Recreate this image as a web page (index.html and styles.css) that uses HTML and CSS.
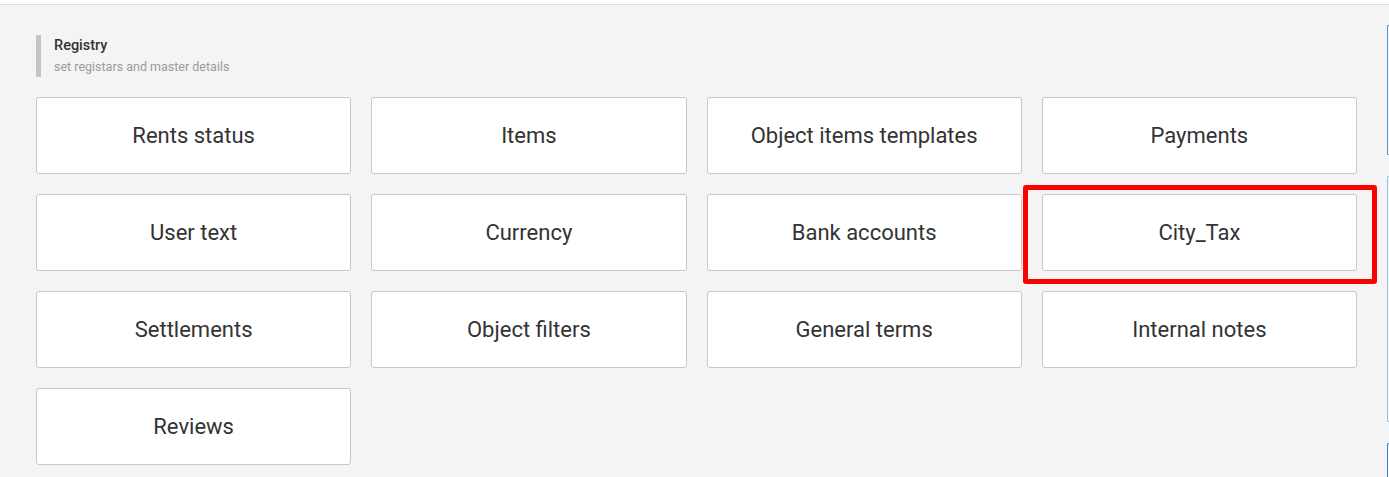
FILE: index.html
```html
<!DOCTYPE html>
<html>
<head>
<meta charset="utf-8">
<link rel="stylesheet" href="styles.css">
</head>
<body>
<div class="topbar"></div>
<div class="layout">
  <main class="main">
    <div class="section-head">
      <div class="section-title">Registry</div>
      <div class="section-sub">set registars and master details</div>
    </div>
    <div class="grid">
      <div class="card">Rents status</div>
      <div class="card">Items</div>
      <div class="card">Object items templates</div>
      <div class="card">Payments</div>
      <div class="card">User text</div>
      <div class="card">Currency</div>
      <div class="card">Bank accounts</div>
      <div class="card card-marked">City_Tax<span class="mark"></span></div>
      <div class="card">Settlements</div>
      <div class="card">Object filters</div>
      <div class="card">General terms</div>
      <div class="card">Internal notes</div>
      <div class="card">Reviews</div>
    </div>
  </main>
  <aside class="side">
    <div class="side-item side-a"></div>
    <div class="side-item side-b"></div>
    <div class="side-item side-c"></div>
  </aside>
</div>
</body>
</html>
```
FILE: styles.css
```css
html, body {
  margin: 0;
  padding: 0;
  height: 100%;
  overflow: hidden;
}
body {
  background: #f4f4f4;
  font-family: Roboto, "Liberation Sans", sans-serif;
  color: #333;
}
.topbar {
  height: 4px;
  background: #fff;
  border-bottom: 1px solid #dcdcdc;
}
.layout {
  display: flex;
  align-items: flex-start;
  height: 472px;
  overflow: hidden;
}
.main {
  box-sizing: border-box;
  width: 1387px;
  flex: 0 0 1387px;
  padding: 30px 30px 0 36px;
}
.section-head {
  border-left: 5px solid #c4c4c4;
  padding-left: 13px;
  height: 42px;
  box-sizing: border-box;
}
.section-title {
  font-size: 14.5px;
  line-height: 22px;
  font-weight: 500;
  color: #333;
}
.section-sub {
  font-size: 12.5px;
  line-height: 20px;
  color: #9a9a9a;
}
.grid {
  margin-top: 20px;
  display: grid;
  grid-template-columns: repeat(4, 1fr);
  column-gap: 20px;
  row-gap: 20px;
}
.card {
  position: relative;
  height: 77px;
  box-sizing: border-box;
  background: #fff;
  border: 1px solid #c8c8c8;
  border-radius: 3px;
  display: flex;
  align-items: center;
  justify-content: center;
  font-size: 22px;
  color: #333;
  padding-bottom: 1px;
}
.mark {
  position: absolute;
  left: -20px;
  right: -21px;
  top: -10px;
  bottom: -14px;
  border: 5px solid #ff0000;
  border-radius: 3px;
}
.side {
  flex: 1;
  padding-top: 20px;
  display: flex;
  flex-direction: column;
  gap: 21px;
}
.side-item {
  border: 1px solid;
  border-right: none;
  border-radius: 4px 0 0 4px;
  background: #f7f7f7;
}
.side-a {
  height: 128px;
  border-color: #4a90dc;
}
.side-b {
  height: 244px;
  border-color: #8cc4ee;
}
.side-c {
  height: 60px;
  border-color: #3a80d4;
}
```
